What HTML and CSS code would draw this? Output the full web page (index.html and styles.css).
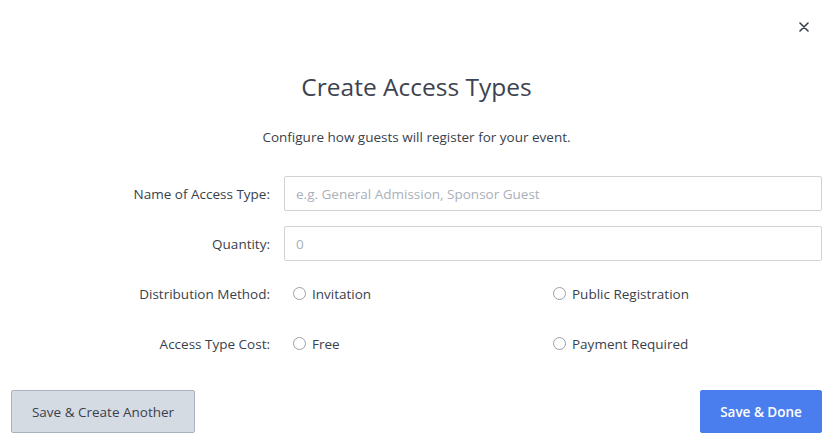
FILE: index.html
```html
<!DOCTYPE html>
<html lang="en">
<head>
<meta charset="utf-8">
<title>Create Access Types</title>
<link rel="stylesheet" href="styles.css">
</head>
<body>
<div class="modal">
  <button class="close" aria-label="Close">
    <svg width="10" height="10" viewBox="0 0 10 10"><path d="M1 1L9 9M9 1L1 9" stroke="#3a3f4b" stroke-width="1.6" stroke-linecap="round"/></svg>
  </button>
  <h1 class="title">Create Access Types</h1>
  <p class="subtitle">Configure how guests will register for your event.</p>
  <form class="form">
    <label class="label" for="name">Name of Access Type:</label>
    <input class="input" id="name" type="text" placeholder="e.g. General Admission, Sponsor Guest">
    <label class="label" for="qty">Quantity:</label>
    <input class="input" id="qty" type="text" placeholder="0">
    <span class="label">Distribution Method:</span>
    <div class="options">
      <label class="option"><span class="radio"></span>Invitation</label>
      <label class="option"><span class="radio"></span>Public Registration</label>
    </div>
    <span class="label">Access Type Cost:</span>
    <div class="options">
      <label class="option"><span class="radio"></span>Free</label>
      <label class="option"><span class="radio"></span>Payment Required</label>
    </div>
  </form>
  <div class="actions">
    <button class="btn btn-secondary" type="button">Save &amp; Create Another</button>
    <button class="btn btn-primary" type="button">Save &amp; Done</button>
  </div>
</div>
</body>
</html>
```
FILE: styles.css
```css
* { box-sizing: border-box; }
html, body { margin: 0; background: #fff; }
body {
  font-family: "Open Sans", "Noto Sans", sans-serif;
  color: #3a3f4b;
  width: 836px;
  height: 446px;
  overflow: hidden;
}
.modal {
  position: relative;
  padding: 70px 14px 13px 11px;
}
.close {
  position: absolute;
  top: 22px;
  right: 27px;
  width: 10px;
  height: 10px;
  padding: 0;
  border: 0;
  background: none;
  display: flex;
}
.title {
  margin: 0;
  text-align: center;
  font-size: 24.5px;
  line-height: 34px;
  font-weight: 400;
  color: #3d4350;
}
.subtitle {
  margin: 23px 0 0;
  text-align: center;
  font-size: 13.5px;
  line-height: 20px;
  color: #3a3f4b;
}
.form {
  margin-top: 29px;
  display: grid;
  grid-template-columns: 259px 1fr;
  column-gap: 14px;
  row-gap: 15px;
  grid-auto-rows: 35px;
}
.label {
  font-size: 13.5px;
  color: #3a3f4b;
  text-align: right;
  align-self: center;
}
.input {
  height: 35px;
  border: 1px solid #cfd3d8;
  border-radius: 2px;
  padding: 0 11px;
  font: inherit;
  font-size: 13.5px;
  color: #3a3f4b;
  background: #fff;
  outline: none;
}
.input::placeholder { color: #a9b0b9; }
.options {
  display: grid;
  grid-template-columns: 260px 1fr;
  padding-left: 9px;
  align-items: center;
}
.option {
  display: flex;
  align-items: center;
  gap: 6px;
  font-size: 13.5px;
  color: #3a3f4b;
}
.radio {
  width: 13px;
  height: 13px;
  border: 1px solid #9aa0a8;
  border-radius: 50%;
  background: #fff;
  flex: none;
}
.actions {
  margin-top: 29px;
  display: flex;
  justify-content: space-between;
}
.btn {
  height: 43px;
  font-family: inherit;
  font-size: 13.5px;
  border-radius: 2px;
  cursor: pointer;
}
.btn-secondary {
  width: 184px;
  background: #d5dbe3;
  border: 1px solid #a9b2be;
  color: #3a3f4b;
}
.btn-primary {
  width: 122px;
  background: #4a7eee;
  border: 1px solid #4a7eee;
  color: #fff;
  font-weight: 600;
}
```
